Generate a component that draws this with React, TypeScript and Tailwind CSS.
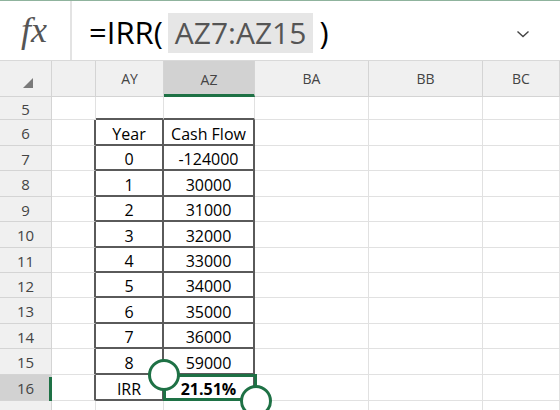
import React from "react";

const colW = [52, 44, 68, 91, 114, 114, 77];
const colNames = ["", "", "AY", "AZ", "BA", "BB", "BC"];
const rowH: Record<number, number> = { 5: 23, 6: 26, 7: 25, 8: 26, 9: 25, 10: 26, 11: 25, 12: 25, 13: 26, 14: 25, 15: 26, 16: 26, 17: 26 };
const data: Record<number, [string, string]> = {
  6: ["Year", "Cash Flow"],
  7: ["0", "-124000"],
  8: ["1", "30000"],
  9: ["2", "31000"],
  10: ["3", "32000"],
  11: ["4", "33000"],
  12: ["5", "34000"],
  13: ["6", "35000"],
  14: ["7", "36000"],
  15: ["8", "59000"],
  16: ["IRR", "21.51%"],
};

const cellFont = { fontFamily: '"Open Sans", "Noto Sans", sans-serif' };

function Cell({ row, col }: { row: number; col: number }) {
  const inTable = row >= 6 && row <= 16;
  const w = colW[col];
  const h = rowH[row];
  if (col === 0) {
    const sel = row === 16;
    return (
      <div
        className={`flex items-center justify-center border-r border-b border-[#d4d4d4] text-[15px] text-[#444] ${sel ? "bg-[#d2d2d2]" : "bg-[#f0f0f0]"}`}
        style={{ width: w, height: h, ...cellFont, paddingTop: 2 }}
      >
        {row <= 16 ? row : ""}
      </div>
    );
  }
  let rightDark = false;
  let bottomDark = false;
  if (inTable && (col === 1 || col === 2 || col === 3)) rightDark = true;
  if (row >= 5 && row <= 16 && (col === 2 || col === 3)) bottomDark = true;
  let text = "";
  if (inTable && col === 2) text = data[row][0];
  if (inTable && col === 3) text = data[row][1];
  const bold = row === 16 && col === 3;
  return (
    <div
      className={`flex items-center justify-center text-[16px] text-black border-r border-b ${rightDark ? "border-r-[#5a5a5a] border-r-2" : "border-r-[#e1e1e1]"} ${bottomDark ? "border-b-[#5a5a5a] border-b-2" : "border-b-[#e1e1e1]"} ${bold ? "font-bold" : ""}`}
      style={{ width: w, height: h, ...cellFont, paddingTop: 3 }}
    >
      {text}
    </div>
  );
}

export default function App() {
  const rows = [5, 6, 7, 8, 9, 10, 11, 12, 13, 14, 15, 16, 17];
  return (
    <div className="w-[560px] h-[410px] overflow-hidden bg-white relative">
      {/* formula bar */}
      <div className="h-[61px] border-t border-t-[#8fb39d] border-b border-b-[#d9d9d9] flex items-stretch">
        <div className="w-[72px] border-r-2 border-r-[#e3e3e3] flex items-center justify-center">
          <span className="text-[36px] italic text-[#555] pb-[2px] pr-[2px]" style={{ fontFamily: '"Liberation Serif", serif' }}>
            fx
          </span>
        </div>
        <div className="flex-1 flex items-center pl-[17px] pt-[4px]" style={{ fontFamily: '"Open Sans", sans-serif' }}>
          <span className="text-[31px] text-black leading-none">=IRR(</span>
          <span className="ml-[5px] bg-[#e6e6e6] h-[40px] px-[7px] flex items-center text-[30px] text-[#555] leading-none">
            AZ7:AZ15
          </span>
          <span className="ml-[6px] text-[31px] text-black leading-none">)</span>
          <div className="flex-1" />
          <svg width="14" height="10" viewBox="0 0 14 10" className="mr-[30px] mt-[2px]">
            <path d="M1.5 2.5 L7 7.5 L12.5 2.5" fill="none" stroke="#444" strokeWidth="1.4" />
          </svg>
        </div>
      </div>
      {/* column headers */}
      <div className="flex h-[36px]">
        {colW.map((w, i) => (
          <div
            key={i}
            className={`flex items-center justify-center border-r border-b text-[14px] text-[#444] ${i === 3 ? "bg-[#d2d2d2] border-b-[3px] border-b-[#1e7145] border-r-[#d4d4d4]" : "bg-[#f0f0f0] border-[#d4d4d4]"}`}
            style={{ width: w, ...cellFont, paddingTop: i === 3 ? 3 : 0 }}
          >
            {i === 0 ? (
              <svg width="12" height="12" viewBox="0 0 12 12" className="mt-[8px] ml-[4px]">
                <path d="M11 1 L11 11 L1 11 Z" fill="#7a7a7a" />
              </svg>
            ) : (
              colNames[i]
            )}
          </div>
        ))}
      </div>
      {/* grid */}
      <div className="relative">
        {rows.map((r) => (
          <div key={r} className="flex">
            {colW.map((_, c) => (
              <Cell key={c} row={r} col={c} />
            ))}
          </div>
        ))}
        {/* selected row header marker */}
        <div className="absolute left-[49px] top-[280px] w-[3px] h-[24px] bg-[#1e7145]" />
        {/* selection */}
        <div className="absolute left-[163px] top-[277px] w-[94px] h-[27px] border-[3px] border-[#1e7145]" />
        <div className="absolute left-[148px] top-[262px] w-[32px] h-[32px] rounded-full border-[3px] border-[#1e7145] bg-white" />
        <div className="absolute left-[240px] top-[288px] w-[32px] h-[32px] rounded-full border-[3px] border-[#1e7145] bg-white" />
      </div>
    </div>
  );
}
